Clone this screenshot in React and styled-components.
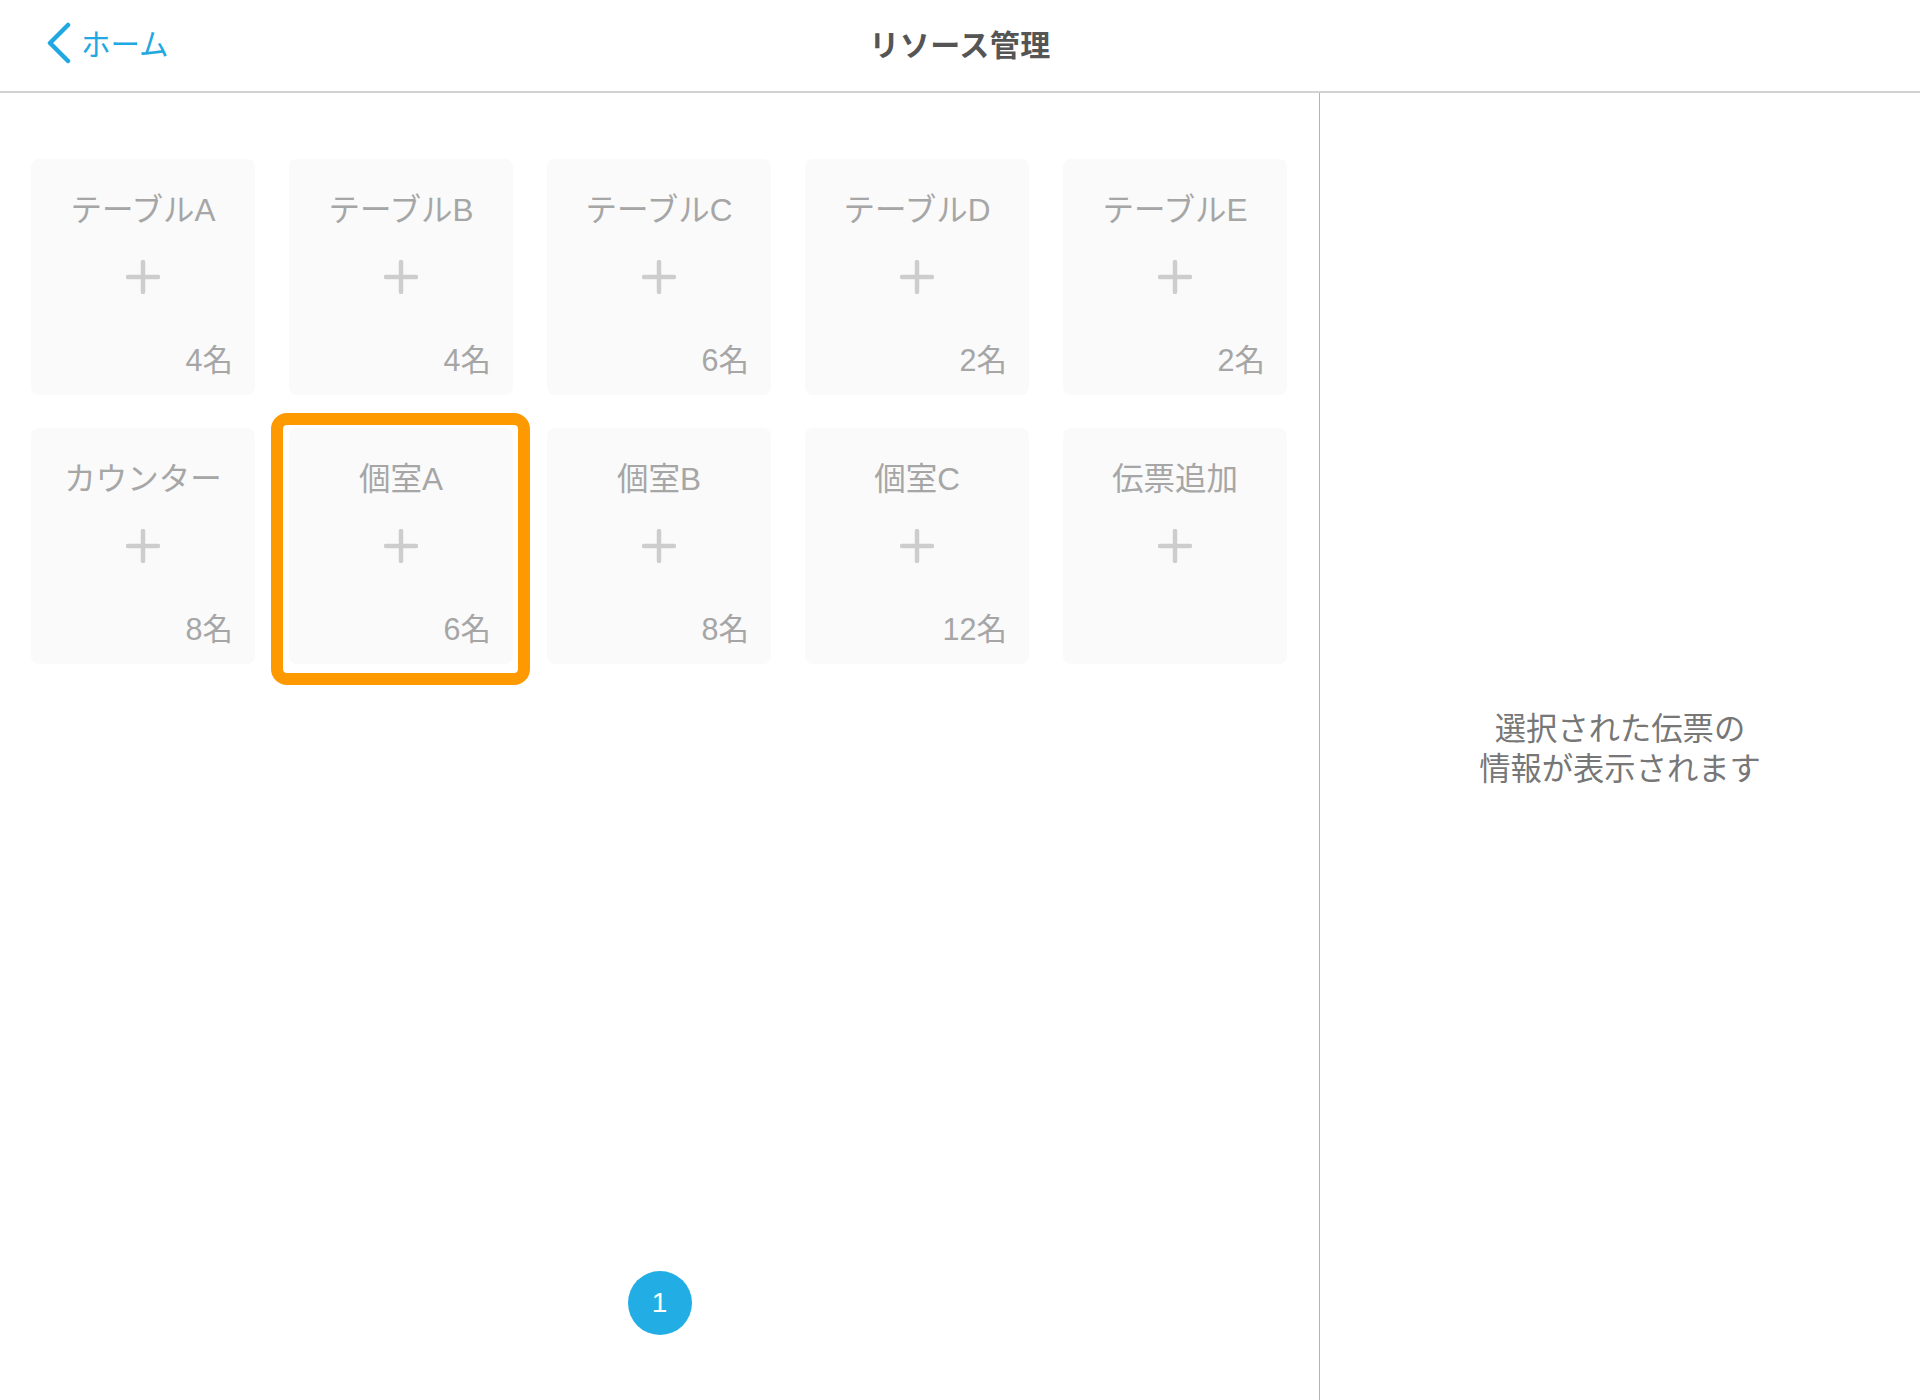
import React from "react";
import styled, { createGlobalStyle } from "styled-components";

const GlobalStyle = createGlobalStyle`
  html, body { margin: 0; padding: 0; background: #fff; }
  body { font-family: "Liberation Sans", "Noto Sans CJK JP", sans-serif; }
  * { box-sizing: border-box; }
`;

const Page = styled.div`
  width: 1920px;
  height: 1400px;
  display: flex;
  flex-direction: column;
  background: #fff;
  overflow: hidden;
`;

const Header = styled.header`
  height: 93px;
  flex: none;
  border-bottom: 2px solid #d2d2d2;
  display: grid;
  grid-template-columns: 1fr auto 1fr;
  align-items: center;
  padding: 0 0 6px 0;
`;

const BackButton = styled.button`
  justify-self: start;
  margin-left: 46px;
  display: flex;
  align-items: center;
  gap: 9px;
  border: none;
  background: none;
  padding: 0;
  color: #1fa8e2;
  font-family: "Noto Sans CJK JP", sans-serif;
  font-size: 29.5px;
  font-weight: 400;
  cursor: pointer;
  line-height: 1;
`;

const Title = styled.h1`
  margin: 0;
  font-family: "Noto Sans CJK JP", sans-serif;
  font-size: 30px;
  font-weight: 700;
  color: #555;
  letter-spacing: 0.5px;
`;

const Main = styled.main`
  flex: 1;
  display: flex;
  min-height: 0;
`;

const LeftPanel = styled.section`
  width: 1320px;
  flex: none;
  border-right: 1.5px solid #b4b4b4;
  display: flex;
  flex-direction: column;
  justify-content: space-between;
  padding: 66px 0 65px 31px;
`;

const Grid = styled.div`
  display: grid;
  grid-template-columns: repeat(5, 224px);
  grid-auto-rows: 236px;
  column-gap: 34px;
  row-gap: 33px;
`;

const Card = styled.div`
  position: relative;
  background: #fafafa;
  border-radius: 8px;
  display: flex;
  flex-direction: column;
  align-items: center;
  padding: 33px 22px 17px;
  color: #a6a6a6;

  ${(p) =>
    p.$selected &&
    `
    &::before {
      content: "";
      position: absolute;
      top: -15px;
      bottom: -21px;
      left: -18px;
      right: -17px;
      border: 12px solid #ff9900;
      border-radius: 16px;
      pointer-events: none;
    }
  `}
`;

const CardTitle = styled.div`
  font-size: 31.5px;
  font-weight: 400;
  line-height: 36px;
  white-space: nowrap;
`;

const PlusWrap = styled.div`
  position: absolute;
  left: 50%;
  top: 50%;
  transform: translate(-50%, -50%);
  width: 34px;
  height: 34px;
`;

const Count = styled.div`
  margin-top: auto;
  align-self: flex-end;
  font-size: 30.5px;
  font-weight: 400;
  line-height: 36px;
`;

const Pager = styled.div`
  display: flex;
  justify-content: center;
  padding-right: 31px;
`;

const PageDot = styled.div`
  width: 64px;
  height: 64px;
  border-radius: 50%;
  background: #22aee5;
  color: #fff;
  display: flex;
  align-items: center;
  justify-content: center;
  font-size: 28px;
  font-weight: 400;
  font-family: "Liberation Sans", sans-serif;
`;

const RightPanel = styled.section`
  flex: 1;
  display: flex;
  align-items: center;
  justify-content: center;
`;

const Placeholder = styled.p`
  margin: 0;
  text-align: center;
  color: #777;
  font-family: "Noto Sans CJK JP", sans-serif;
  font-size: 31.3px;
  font-weight: 400;
  line-height: 40px;
`;

const Plus = () => (
  <PlusWrap>
    <svg width="34" height="34" viewBox="0 0 34 34">
      <path d="M17 2 V32 M2 17 H32" stroke="#cdcdcd" strokeWidth="4.5" strokeLinecap="round" fill="none" />
    </svg>
  </PlusWrap>
);

const items = [
  { name: "テーブルA", count: "4名" },
  { name: "テーブルB", count: "4名" },
  { name: "テーブルC", count: "6名" },
  { name: "テーブルD", count: "2名" },
  { name: "テーブルE", count: "2名" },
  { name: "カウンター", count: "8名" },
  { name: "個室A", count: "6名", selected: true },
  { name: "個室B", count: "8名" },
  { name: "個室C", count: "12名" },
  { name: "伝票追加", count: null },
];

export default function App() {
  return (
    <>
      <GlobalStyle />
      <Page>
        <Header>
          <BackButton>
            <svg width="26" height="42" viewBox="0 0 26 42">
              <polyline points="22,3 4,21 22,39" stroke="#1fa8e2" strokeWidth="4.5" strokeLinecap="round" strokeLinejoin="round" fill="none" />
            </svg>
            ホーム
          </BackButton>
          <Title>リソース管理</Title>
          <div />
        </Header>
        <Main>
          <LeftPanel>
            <Grid>
              {items.map((it) => (
                <Card key={it.name} $selected={it.selected}>
                  <CardTitle>{it.name}</CardTitle>
                  <Plus />
                  {it.count && <Count>{it.count}</Count>}
                </Card>
              ))}
            </Grid>
            <Pager>
              <PageDot>1</PageDot>
            </Pager>
          </LeftPanel>
          <RightPanel>
            <Placeholder>
              選択された伝票の
              <br />
              情報が表示されます
            </Placeholder>
          </RightPanel>
        </Main>
      </Page>
    </>
  );
}
